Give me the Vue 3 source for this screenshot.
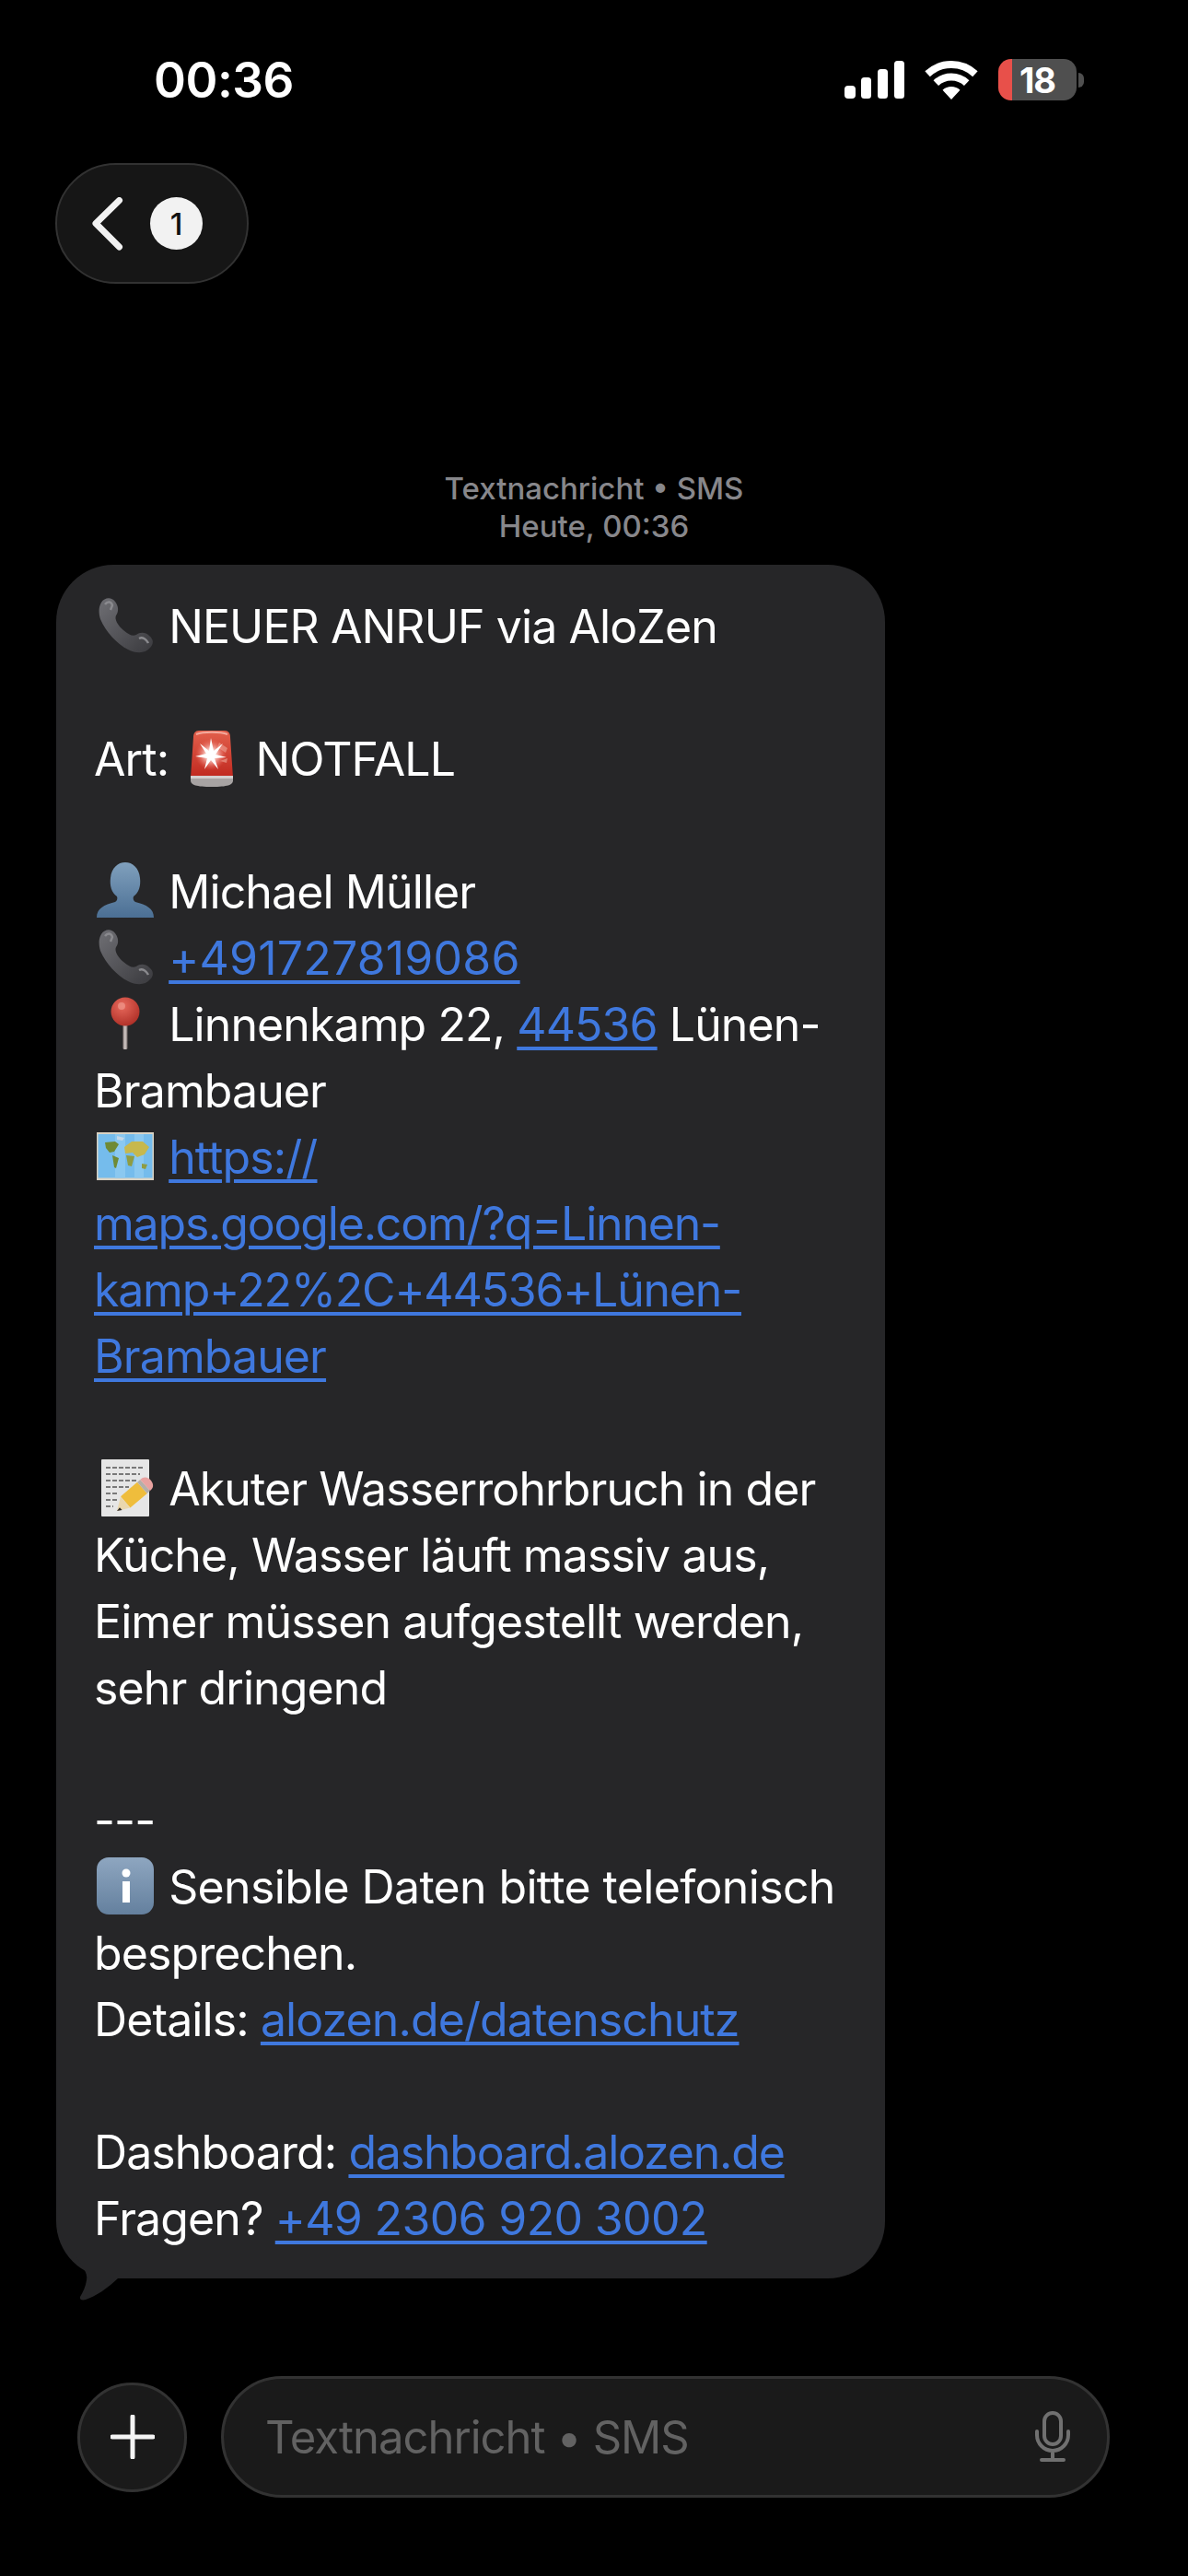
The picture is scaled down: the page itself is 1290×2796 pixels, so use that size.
<script setup>
const kanal = 'Textnachricht • SMS'
</script>

<template>
  <div class="screen">
    <header class="statusbar">
      <span class="time">00:36</span>
      <div class="status-icons">
        <svg width="65" height="41" viewBox="0 0 65 41">
          <rect x="0" y="27" width="12" height="14" rx="4" fill="#fff" />
          <rect x="18" y="18" width="11" height="23" rx="3.5" fill="#fff" />
          <rect x="36" y="9" width="11" height="32" rx="3.5" fill="#fff" />
          <rect x="54" y="0" width="11" height="41" rx="3.5" fill="#fff" />
        </svg>
        <svg width="58" height="42" viewBox="0 0 58 42">
          <path d="M29 42 L19.5 31.8 A14 14 0 0 1 38.5 31.8 Z" fill="#fff" />
          <path d="M12.3 24.1 A24.5 24.5 0 0 1 45.7 24.1" fill="none" stroke="#fff" stroke-width="8" />
          <path d="M3.1 14.2 A38 38 0 0 1 54.9 14.2" fill="none" stroke="#fff" stroke-width="8" />
        </svg>
        <div class="battery">
          <div class="battery-body"><span>18</span></div>
          <div class="battery-cap"></div>
        </div>
      </div>
    </header>

    <button type="button" class="back">
      <svg width="34" height="58" viewBox="0 0 34 58">
        <path d="M29.5 3.5 L4 28.5 L29.5 54" fill="none" stroke="#f2f2f2" stroke-width="7" stroke-linecap="round" stroke-linejoin="round" />
      </svg>
      <span class="count">1</span>
    </button>

    <div class="meta">
      <div>{{ kanal }}</div>
      <div>Heute, 00:36</div>
    </div>

    <main class="bubble">
      <p>
        <svg class="emoji" viewBox="0 0 62 62"><use href="#phone" /></svg> NEUER ANRUF via AloZen<br />
        <br />
        Art: <svg class="emoji" viewBox="0 0 62 62"><use href="#siren" /></svg> NOTFALL<br />
        <br />
        <svg class="emoji" viewBox="0 0 62 62"><use href="#person" /></svg> Michael Müller<br />
        <svg class="emoji" viewBox="0 0 62 62"><use href="#phone" /></svg> <a class="nummer">+491727819086</a><br />
        <svg class="emoji" viewBox="0 0 62 62"><use href="#pin" /></svg> Linnenkamp 22, <a>44536</a> Lünen-<br />
        Brambauer<br />
        <svg class="emoji" viewBox="0 0 62 62"><use href="#map" /></svg> <a>https://</a><br />
        <a class="eng">maps.google.com/?q=Linnen-</a><br />
        <a class="eng">kamp+22%2C+44536+Lünen-</a><br />
        <a>Brambauer</a><br />
        <br />
        <svg class="emoji" viewBox="0 0 62 62"><use href="#memo" /></svg> Akuter Wasserrohrbruch in der<br />
        Küche, Wasser läuft massiv aus,<br />
        Eimer müssen aufgestellt werden,<br />
        sehr dringend<br />
        <br />
        ---<br />
        <svg class="emoji" viewBox="0 0 62 62"><use href="#info" /></svg> <span class="weit">Sensible Daten bitte telefonisch</span><br />
        besprechen.<br />
        Details: <a>alozen.de/datenschutz</a><br />
        <br />
        Dashboard: <a class="eng">dashboard.alozen.de</a><br />
        Fragen? <a class="weit">+49 2306 920 3002</a>
      </p>
      <svg class="tail" width="60" height="47" viewBox="0 0 60 47">
        <path d="M3 0 C8 10 16 16 14 25 C13 32 10 38 7 43 C6 46 9 47 13 46 C25 42 36 34 48 23 L60 23 L60 0 Z" fill="#262628" />
      </svg>
    </main>

    <footer class="composer">
      <button type="button" class="plus">
        <svg width="48" height="48" viewBox="0 0 48 48">
          <path d="M24 2 V46 M2 24 H46" stroke="#f4f4f4" stroke-width="5" stroke-linecap="round" />
        </svg>
      </button>
      <div class="field">
        <span>{{ kanal }}</span>
        <svg width="40" height="56" viewBox="0 0 40 56">
          <rect x="11" y="2" width="18" height="34" rx="9" fill="none" stroke="#707070" stroke-width="4" />
          <path d="M3 22 V26 A17 17 0 0 0 37 26 V22 M20 43 V52 M8 53 H32" fill="none" stroke="#707070" stroke-width="4" stroke-linecap="round" />
        </svg>
      </div>
    </footer>

    <svg class="defs" width="0" height="0">
      <defs>
        <linearGradient id="phoneGrad" x1="0" y1="0" x2="1" y2="1">
          <stop offset="0" stop-color="#6f6f74" />
          <stop offset="1" stop-color="#3a3a3e" />
        </linearGradient>
        <linearGradient id="personGrad" x1="0" y1="0" x2="0" y2="1">
          <stop offset="0" stop-color="#80a0bd" />
          <stop offset="1" stop-color="#4b6f94" />
        </linearGradient>
        <radialGradient id="pinGrad" cx="0.4" cy="0.3" r="0.8">
          <stop offset="0" stop-color="#e8695c" />
          <stop offset="1" stop-color="#a92a22" />
        </radialGradient>
        <linearGradient id="sirenGrad" x1="0" y1="0" x2="0" y2="1">
          <stop offset="0" stop-color="#e2604c" />
          <stop offset="1" stop-color="#c0281f" />
        </linearGradient>
        <radialGradient id="glow" cx="0.5" cy="0.5" r="0.5">
          <stop offset="0" stop-color="#fff" />
          <stop offset="0.35" stop-color="#fbd8d2" stop-opacity="0.9" />
          <stop offset="1" stop-color="#f0675a" stop-opacity="0" />
        </radialGradient>
        <linearGradient id="infoGrad" x1="0" y1="0" x2="0" y2="1">
          <stop offset="0" stop-color="#8ea6c0" />
          <stop offset="1" stop-color="#64809e" />
        </linearGradient>
        <linearGradient id="stick" x1="0" y1="0" x2="1" y2="0">
          <stop offset="0" stop-color="#8f8482" />
          <stop offset="0.5" stop-color="#d2cac8" />
          <stop offset="1" stop-color="#756b69" />
        </linearGradient>
        <symbol id="phone" viewBox="0 0 62 62">
          <path d="M5 6 C9 0 16 0 20 5 C24 10 24 16 21 20 C19 24 23 31 29 36 C35 41 39 43 43 41 C47 38 53 38 57 42 C62 46 62 51 58 55 C53 61 44 62 34 57 C22 51 10 38 4 24 C2 17 2 11 5 6 Z" fill="url(#phoneGrad)" />
          <path d="M9 8 C12 4 16 5 17 9 L15 14 M46 45 C50 43 54 46 56 50" fill="none" stroke="#8a8a8e" stroke-width="2.5" />
        </symbol>
        <symbol id="siren" viewBox="0 0 62 62">
          <path d="M17 1 H45 C49 1 51 4 51 8 L54 52 H8 L11 8 C11 4 13 1 17 1 Z" fill="url(#sirenGrad)" />
          <path d="M14 5 C22 2 40 2 48 5" fill="none" stroke="#f3a99c" stroke-width="2" />
          <path d="M39 14 L48 20 L46 25 L37 19 Z M40 34 L48 31 L47 36 Z" fill="#e99b8d" opacity="0.7" />
          <circle cx="30" cy="27" r="17" fill="url(#glow)" />
          <path d="M30 9 L33 23 L43 15 L35 27 L47 30 L34 31 L38 43 L30 33 L23 43 L26 31 L13 29 L25 26 L18 15 L28 23 Z" fill="#fff" />
          <path d="M8 50 H54 V55 C54 60 48 62 31 62 C14 62 8 60 8 55 Z" fill="#a7a3a3" />
          <path d="M8 50 H54 V53 H8 Z" fill="#d5cfcf" />
        </symbol>
        <symbol id="person" viewBox="0 0 62 62">
          <path d="M0 60 C0 50 8 46 20 43 C22 42 23 39 22 37 C16 33 14 25 15 17 C16 6 23 0 31 0 C39 0 46 6 47 17 C48 25 46 33 40 37 C39 39 40 42 42 43 C54 46 62 50 62 60 Z" fill="url(#personGrad)" />
        </symbol>
        <symbol id="pin" viewBox="0 0 62 62">
          <rect x="28.5" y="30" width="5" height="29" rx="1.5" fill="url(#stick)" />
          <circle cx="31" cy="18" r="15.5" fill="url(#pinGrad)" />
          <circle cx="27" cy="12" r="4" fill="#f2a196" opacity="0.6" />
        </symbol>
        <symbol id="map" viewBox="0 0 62 62">
          <rect x="0" y="5" width="62" height="52" fill="#d9d2c3" />
          <rect x="1.5" y="7" width="59" height="47.5" fill="#75bcec" />
          <rect x="20" y="7" width="11" height="47.5" fill="#8ac8f0" />
          <rect x="41" y="7" width="10" height="47.5" fill="#8ac8f0" />
          <path d="M9 16 L20 15 L24 18 L19 26 L14 27 L10 22 Z M17 30 L24 33 L21 44 L19 43 Z" fill="#6f8a35" />
          <path d="M30 21 L38 15 L50 15 L57 21 L52 29 L44 32 L39 27 L31 28 Z" fill="#c7b84d" />
          <path d="M32 30 L41 31 L38 42 L34 41 Z M49 39 L55 40 L53 45 L49 44 Z" fill="#8f9c42" />
          <path d="M22 9 L30 11 L28 14 L22 13 Z" fill="#c5d8e8" />
        </symbol>
        <symbol id="memo" viewBox="0 0 62 62">
          <rect x="5" y="0" width="52" height="62" rx="1" fill="#e6e6e6" />
          <path d="M10 9 H50 M10 16 H47 M10 23 H44 M10 30 H35 M10 37 H22 M10 44 H22 M10 51 H18" stroke="#555" stroke-width="1.4" stroke-dasharray="5 2" />
          <path d="M44 24.7 L54.8 36.9 L36.4 52.4 L26 40.2 Z" fill="#efbd3c" />
          <path d="M26 40.2 L36.4 52.4 L22 56 Z" fill="#ead7ae" />
          <path d="M25 52.2 L27.6 55 L22 56 Z" fill="#2f2a28" />
          <path d="M44 24.7 L54.8 36.9 L58 34 L47.2 22 Z" fill="#b5afa9" />
          <path d="M47.2 22 C51 18 56 19 59 23 C62 27 62 31 58 34 Z" fill="#e8a2a0" />
        </symbol>
        <symbol id="info" viewBox="0 0 62 62">
          <rect x="0" y="0" width="62" height="62" rx="13" fill="url(#infoGrad)" />
          <circle cx="32" cy="17" r="4.5" fill="#fff" />
          <rect x="28" y="26" width="8" height="23" fill="#fff" />
        </symbol>
      </defs>
    </svg>
  </div>
</template>

<style>
html,
body {
  background: #000;
}
</style>

<style scoped>
.screen {
  width: 1290px;
  height: 2796px;
  background: #000;
  color: #fff;
  font-family: Inter, "Liberation Sans", sans-serif;
  display: flex;
  flex-direction: column;
  box-sizing: border-box;
}

.statusbar {
  height: 177px;
  flex: none;
  box-sizing: border-box;
  padding: 56px 0 0 167px;
  display: flex;
  justify-content: space-between;
  align-items: flex-start;
}

.time {
  font-size: 53px;
  line-height: 62px;
  font-weight: 600;
  letter-spacing: -0.5px;
}

.status-icons {
  display: flex;
  align-items: center;
  gap: 22px;
  padding: 8px 113px 0 0;
}

.battery {
  display: flex;
  align-items: center;
  gap: 2px;
}

.battery-body {
  width: 85px;
  height: 45px;
  border-radius: 14px;
  background: linear-gradient(90deg, #e8504a 0 15px, #4f4f4f 15px);
  display: flex;
  align-items: center;
  justify-content: center;
}

.battery-body span {
  font-size: 38px;
  font-weight: 700;
  letter-spacing: -1px;
}

.battery-cap {
  width: 6px;
  height: 16px;
  border-radius: 0 6px 6px 0;
  background: #4f4f4f;
}

.back {
  width: 210px;
  height: 131px;
  margin-left: 60px;
  flex: none;
  box-sizing: border-box;
  padding: 0 0 0 38px;
  border: 2px solid #323232;
  border-radius: 66px;
  background: #161616;
  display: flex;
  align-items: center;
  gap: 29px;
}

.count {
  width: 57px;
  height: 57px;
  border-radius: 50%;
  background: #f2f2f2;
  color: #111;
  font-family: Inter, sans-serif;
  font-size: 33px;
  font-weight: 500;
  display: flex;
  align-items: center;
  justify-content: center;
}

.meta {
  margin-top: 202px;
  flex: none;
  text-align: center;
  color: #87878b;
  font-size: 33px;
  line-height: 41px;
  font-weight: 500;
}

.bubble {
  position: relative;
  margin: 21px 0 0 61px;
  width: 900px;
  height: 1860px;
  box-sizing: border-box;
  flex: none;
  padding: 31px 20px 0 41px;
  background: #262628;
  border-radius: 62px;
}

.bubble p {
  margin: 0;
  font-size: 50px;
  line-height: 72px;
  letter-spacing: -0.9px;
  white-space: nowrap;
  color: #fff;
}

.bubble a {
  color: #3f78de;
  text-decoration: underline;
  text-decoration-thickness: 3.5px;
  text-underline-offset: 6px;
}

.bubble .nummer {
  letter-spacing: 0.2px;
}

.bubble .eng {
  letter-spacing: -1.2px;
}

.bubble .weit {
  letter-spacing: -0.65px;
}

.emoji {
  width: 62px;
  height: 62px;
  margin: 0 3px 0 3px;
  vertical-align: -12px;
}

.tail {
  position: absolute;
  left: 19px;
  bottom: -24px;
}

.composer {
  margin: 106px 0 0 84px;
  width: 1121px;
  display: flex;
  align-items: center;
  gap: 37px;
  flex: none;
}

.plus {
  width: 119px;
  height: 119px;
  flex: none;
  padding: 0;
  border: 3px solid #323232;
  border-radius: 50%;
  background: #1a1a1a;
  display: flex;
  align-items: center;
  justify-content: center;
}

.field {
  flex: 1;
  height: 132px;
  box-sizing: border-box;
  padding: 0 39px 0 45px;
  border: 3px solid #323232;
  border-radius: 66px;
  background: #1a1a1a;
  display: flex;
  align-items: center;
  justify-content: space-between;
  color: #626262;
  font-size: 49px;
  letter-spacing: -1px;
}

.defs {
  position: absolute;
}
</style>
